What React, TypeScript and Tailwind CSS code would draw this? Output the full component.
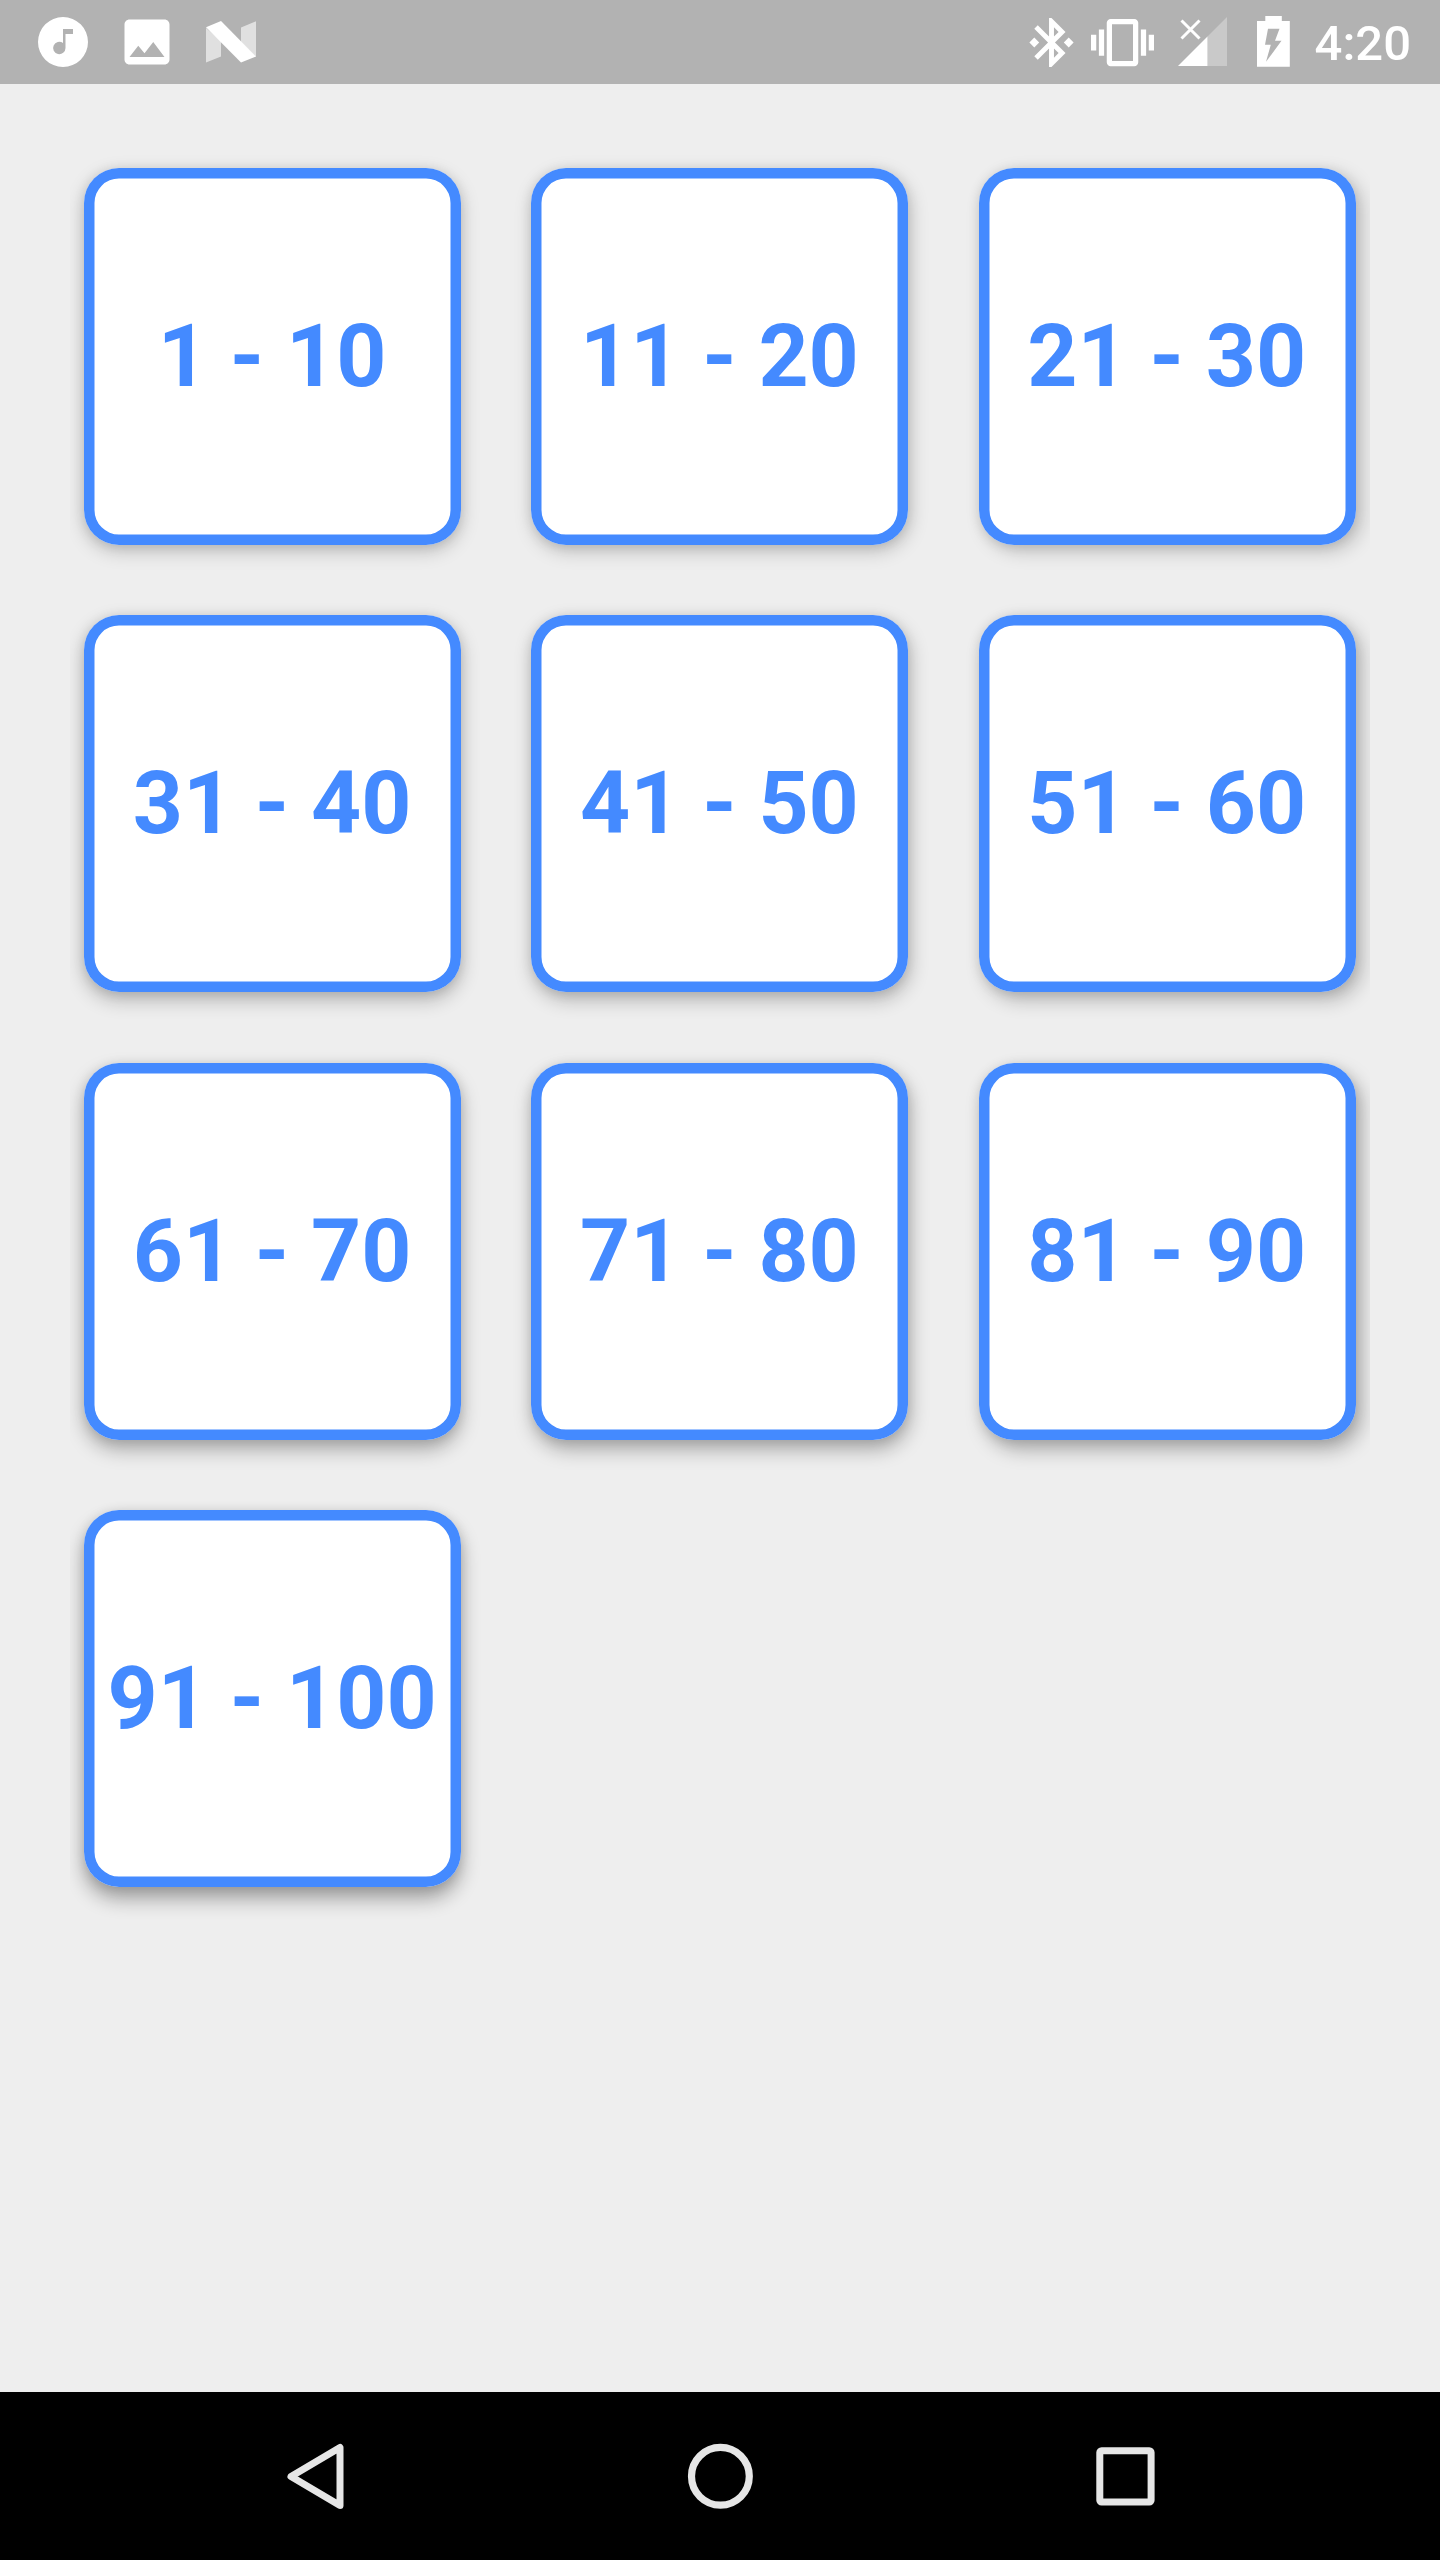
import React from "react";

const RANGES = [
  "1 - 10", "11 - 20", "21 - 30",
  "31 - 40", "41 - 50", "51 - 60",
  "61 - 70", "71 - 80", "81 - 90",
  "91 - 100",
];

function cardShadow(index: number) {
  const row = Math.floor(index / 3);
  const col = index % 3;
  const dx = [0, 2, 6][col];
  const dy = 6 + row * 1.9;
  const alpha = 0.2 + row * 0.04;
  return `inset 0 0 0 10.5px #448aff, ${dx}px ${dy}px 19px rgba(0,0,0,${alpha}), 0 2px 12px rgba(0,0,0,0.1)`;
}

function StatusBar() {
  return (
    <header className="flex h-[84px] shrink-0 items-center justify-between bg-[#b2b2b2] text-white">
      <div className="flex items-center gap-6 pl-[33px]">
        <svg className="size-[60px]" viewBox="0 0 60 60" fill="currentColor">
          <path
            fillRule="evenodd"
            d="M30 5a25 25 0 1 0 0 50a25 25 0 1 0 0-50zM30 17h10v5h-7.500v14a6.200 6.200 0 1 1-2.500-5z"
          />
        </svg>
        <svg className="size-[60px]" viewBox="0 0 24 24" fill="currentColor">
          <path d="M21 19V5c0-1.100-.9-2-2-2H5c-1.100 0-2 .9-2 2v14c0 1.100.9 2 2 2h14c1.100 0 2-.9 2-2zM8.500 13.500l2.500 3.010L14.500 12l4.500 6H5l3.500-4.500z" />
        </svg>
        <svg className="size-[60px]" viewBox="0 0 60 60" fill="currentColor">
          <path opacity=".6" d="M5 16v34.600l15-6V29zM55 9.300l-15 6.200V30l15 15z" />
          <path d="M5 15.300l15-6.200L55 44.500l-15 6.100z" />
        </svg>
      </div>
      <div className="flex items-center pr-[29px]">
        <svg className="mr-[10px] h-[59px] w-[59px]" viewBox="0 0 24 24" fill="currentColor">
          <path d="M7 12l-2-2-2 2 2 2 2-2zm10.710-4.290L12 2h-1v7.590L6.410 5 5 6.410 10.590 12 5 17.590 6.410 19 11 14.410V22h1l5.710-5.710-4.300-4.290 4.300-4.290zM13 5.830l1.880 1.880L13 9.590V5.830zm1.880 10.460L13 18.170v-3.760l1.880 1.880zM19 10l-2 2 2 2 2-2-2-2z" />
        </svg>
        <svg className="mr-[18px] size-[63px]" viewBox="0 0 24 24" fill="currentColor">
          <path d="M0 15h2V9H0v6zm3 2h2V7H3v10zm19-8v6h2V9h-2zm-3 8h2V7h-2v10zM16.500 3h-9C6.670 3 6 3.670 6 4.500v15c0 .83.67 1.500 1.500 1.500h9c.83 0 1.500-.67 1.500-1.500v-15c0-.83-.67-1.500-1.500-1.500zM16 19H8V5h8v14z" />
        </svg>
        <svg className="mr-6 h-[84px] w-[60px]" viewBox="1172 0 60 84">
          <path fill="#fff" fillOpacity=".3" d="M1207.500 36.500L1227 17v49h-19.500z" />
          <path fill="#fff" d="M1178 66l29.500-29.500V66z" />
          <path d="M1181.500 20.500l18 18m0-18l-18 18" stroke="#fff" strokeWidth="3" />
        </svg>
        <svg className="mr-[19px] h-[84px] w-[40px]" viewBox="1256 0 40 84" fill="currentColor">
          <path
            fillRule="evenodd"
            d="M1257 21h8.300v-5h16.500v5h8v45.700H1257zM1268 28.800h11.500l-4.500 12h6.500l-15.500 21 4.800-17H1265z"
          />
        </svg>
        <span className="pt-[2px] text-[49px] leading-[57px] font-medium">4:20</span>
      </div>
    </header>
  );
}

function NavigationBar() {
  return (
    <nav className="flex h-[168px] shrink-0 items-center justify-center gap-[321px] bg-black text-[#e6e6e6]">
      <svg className="size-[84px]" viewBox="273 2434 84 84" fill="none" stroke="currentColor">
        <path d="M291 2476.500L340 2447.500V2505.500z" strokeWidth="7" strokeLinejoin="round" />
      </svg>
      <svg className="size-[84px]" viewBox="0 0 84 84" fill="none" stroke="currentColor">
        <circle cx="42.400" cy="42.300" r="28.900" strokeWidth="7.200" />
      </svg>
      <svg className="size-[84px]" viewBox="0 0 84 84" fill="none" stroke="currentColor">
        <rect x="16.800" y="16.800" width="51.300" height="51.300" rx="1.800" strokeWidth="7" />
      </svg>
    </nav>
  );
}

export default function App() {
  return (
    <div className="flex h-[2560px] w-[1440px] flex-col bg-[#eeeeee] font-['Roboto',sans-serif]">
      <StatusBar />
      <main className="mx-[70px] grow overflow-hidden px-[14px] pt-[84px]">
        <div className="grid grid-cols-3 gap-x-[70px] gap-y-[70.33px]">
          {RANGES.map((range, index) => (
            <button
              key={range}
              className="flex size-[377px] items-center justify-center rounded-[35px] bg-white pt-[0.4px] pr-[0.8px] text-[87.5px] leading-none font-bold whitespace-nowrap text-[#448aff]"
              style={{ boxShadow: cardShadow(index) }}
            >
              {range}
            </button>
          ))}
        </div>
      </main>
      <NavigationBar />
    </div>
  );
}
